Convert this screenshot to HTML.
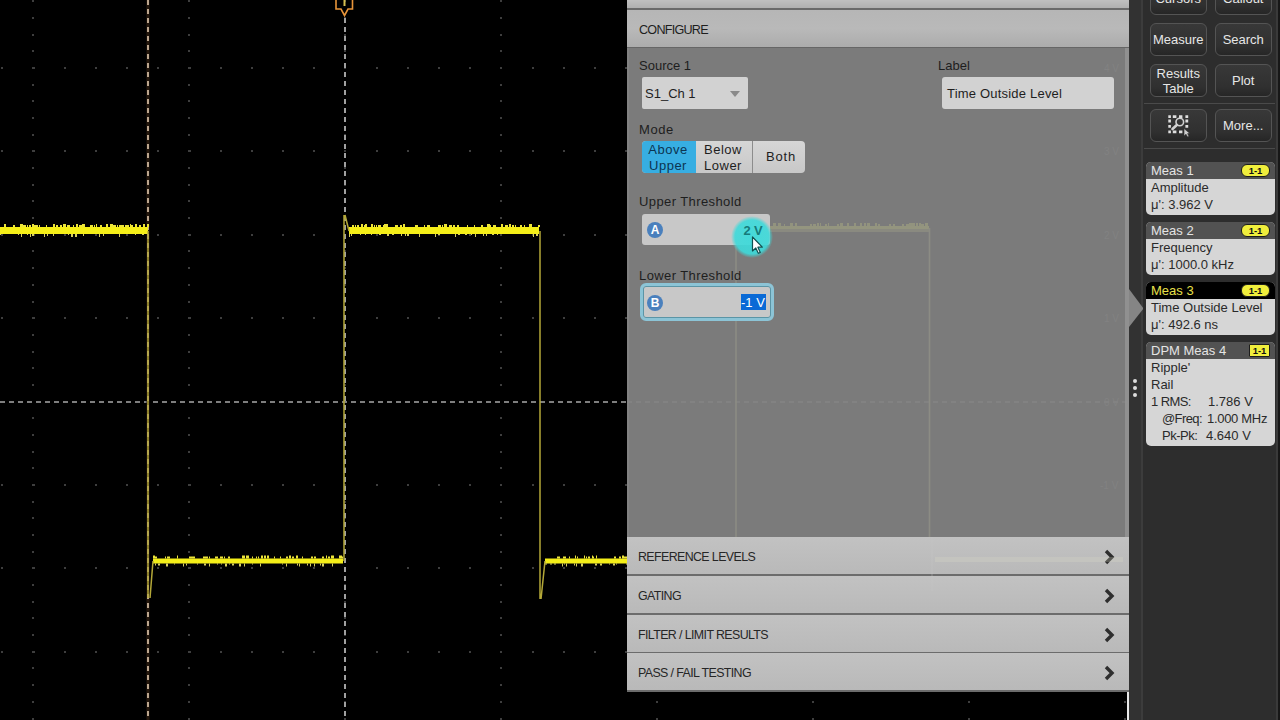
<!DOCTYPE html>
<html><head><meta charset="utf-8">
<style>
*{margin:0;padding:0;box-sizing:border-box}
html,body{width:1280px;height:720px;overflow:hidden;background:#000;font-family:"Liberation Sans",sans-serif}
.abs{position:absolute}
#scope{position:absolute;left:0;top:0;width:1280px;height:720px}
#panel{position:absolute;left:627px;top:0;width:502px;height:692px;background:#7b7b7b;overflow:hidden}
.t{position:absolute;white-space:nowrap;color:#1e1e1e;font-size:13px;line-height:1}
.sec{position:absolute;left:0;width:502px;height:39px;background:linear-gradient(#c2c2c2,#b9b9b9);border-bottom:2px solid #6c6c6c}
.sec .t{left:11px;top:14px;font-size:12.4px;letter-spacing:-0.6px;color:#262626}
.chev{position:absolute;left:474.5px;top:12px;width:14px;height:16px}
#side{position:absolute;left:1143px;top:0;width:137px;height:720px;background:#2d2d2d;border-left:1px solid #2d2d2d}
.btn{position:absolute;width:56.5px;height:33px;border:1.5px solid #545454;border-radius:6px;background:linear-gradient(#383838,#303030 70%,#262626);color:#e6e6e6;font-size:13px;text-align:center;line-height:15px}
.meas{position:absolute;left:2px;width:129px;border-radius:5px;overflow:hidden;background:#d6d6d6}
.mh{height:17px;background:#525252;color:#e4e4e4;font-size:13px;line-height:17px;padding-left:5px;position:relative}
.mb{color:#2a2a2a;font-size:13px;padding-left:5px;line-height:17px;white-space:nowrap}
.pill{position:absolute;right:5px;top:2px;width:29px;height:13px;border-radius:6px;background:#f0ee3c;border:1px solid #1c1c1c;color:#111;font-size:9.5px;font-weight:bold;line-height:11px;text-align:center}
</style></head><body>
<svg id="scope" width="1280" height="720" viewBox="0 0 1280 720">
<path d="M1 67h2v2h-2zM1 150h2v2h-2zM1 234h2v2h-2zM1 317h2v2h-2zM1 484h2v2h-2zM1 567h2v2h-2zM1 651h2v2h-2zM32 0h2v2h-2zM32 17h2v2h-2zM32 34h2v2h-2zM32 50h2v2h-2zM32 67h2v2h-2zM32 84h2v2h-2zM32 100h2v2h-2zM32 117h2v2h-2zM32 134h2v2h-2zM32 150h2v2h-2zM32 167h2v2h-2zM32 184h2v2h-2zM32 200h2v2h-2zM32 217h2v2h-2zM32 234h2v2h-2zM32 250h2v2h-2zM32 267h2v2h-2zM32 284h2v2h-2zM32 301h2v2h-2zM32 317h2v2h-2zM32 334h2v2h-2zM32 351h2v2h-2zM32 367h2v2h-2zM32 384h2v2h-2zM32 417h2v2h-2zM32 434h2v2h-2zM32 451h2v2h-2zM32 467h2v2h-2zM32 484h2v2h-2zM32 501h2v2h-2zM32 517h2v2h-2zM32 534h2v2h-2zM32 551h2v2h-2zM32 567h2v2h-2zM32 584h2v2h-2zM32 601h2v2h-2zM32 617h2v2h-2zM32 634h2v2h-2zM32 651h2v2h-2zM32 667h2v2h-2zM32 684h2v2h-2zM32 701h2v2h-2zM32 718h2v2h-2zM33 67h2v2h-2zM33 150h2v2h-2zM33 234h2v2h-2zM33 317h2v2h-2zM33 484h2v2h-2zM33 567h2v2h-2zM33 651h2v2h-2zM64 67h2v2h-2zM64 150h2v2h-2zM64 234h2v2h-2zM64 317h2v2h-2zM64 484h2v2h-2zM64 567h2v2h-2zM64 651h2v2h-2zM95 67h2v2h-2zM95 150h2v2h-2zM95 234h2v2h-2zM95 317h2v2h-2zM95 484h2v2h-2zM95 567h2v2h-2zM95 651h2v2h-2zM126 67h2v2h-2zM126 150h2v2h-2zM126 234h2v2h-2zM126 317h2v2h-2zM126 484h2v2h-2zM126 567h2v2h-2zM126 651h2v2h-2zM157 67h2v2h-2zM157 150h2v2h-2zM157 234h2v2h-2zM157 317h2v2h-2zM157 484h2v2h-2zM157 567h2v2h-2zM157 651h2v2h-2zM188 0h2v2h-2zM188 17h2v2h-2zM188 34h2v2h-2zM188 50h2v2h-2zM188 67h2v2h-2zM188 84h2v2h-2zM188 100h2v2h-2zM188 117h2v2h-2zM188 134h2v2h-2zM188 150h2v2h-2zM188 167h2v2h-2zM188 184h2v2h-2zM188 200h2v2h-2zM188 217h2v2h-2zM188 234h2v2h-2zM188 250h2v2h-2zM188 267h2v2h-2zM188 284h2v2h-2zM188 301h2v2h-2zM188 317h2v2h-2zM188 334h2v2h-2zM188 351h2v2h-2zM188 367h2v2h-2zM188 384h2v2h-2zM188 417h2v2h-2zM188 434h2v2h-2zM188 451h2v2h-2zM188 467h2v2h-2zM188 484h2v2h-2zM188 501h2v2h-2zM188 517h2v2h-2zM188 534h2v2h-2zM188 551h2v2h-2zM188 567h2v2h-2zM188 584h2v2h-2zM188 601h2v2h-2zM188 617h2v2h-2zM188 634h2v2h-2zM188 651h2v2h-2zM188 667h2v2h-2zM188 684h2v2h-2zM188 701h2v2h-2zM188 718h2v2h-2zM189 67h2v2h-2zM189 150h2v2h-2zM189 234h2v2h-2zM189 317h2v2h-2zM189 484h2v2h-2zM189 567h2v2h-2zM189 651h2v2h-2zM220 67h2v2h-2zM220 150h2v2h-2zM220 234h2v2h-2zM220 317h2v2h-2zM220 484h2v2h-2zM220 567h2v2h-2zM220 651h2v2h-2zM251 67h2v2h-2zM251 150h2v2h-2zM251 234h2v2h-2zM251 317h2v2h-2zM251 484h2v2h-2zM251 567h2v2h-2zM251 651h2v2h-2zM282 67h2v2h-2zM282 150h2v2h-2zM282 234h2v2h-2zM282 317h2v2h-2zM282 484h2v2h-2zM282 567h2v2h-2zM282 651h2v2h-2zM313 67h2v2h-2zM313 150h2v2h-2zM313 234h2v2h-2zM313 317h2v2h-2zM313 484h2v2h-2zM313 567h2v2h-2zM313 651h2v2h-2zM344 0h2v2h-2zM344 17h2v2h-2zM344 34h2v2h-2zM344 50h2v2h-2zM344 67h2v2h-2zM344 84h2v2h-2zM344 100h2v2h-2zM344 117h2v2h-2zM344 134h2v2h-2zM344 150h2v2h-2zM344 167h2v2h-2zM344 184h2v2h-2zM344 200h2v2h-2zM344 217h2v2h-2zM344 234h2v2h-2zM344 250h2v2h-2zM344 267h2v2h-2zM344 284h2v2h-2zM344 301h2v2h-2zM344 317h2v2h-2zM344 334h2v2h-2zM344 351h2v2h-2zM344 367h2v2h-2zM344 384h2v2h-2zM344 417h2v2h-2zM344 434h2v2h-2zM344 451h2v2h-2zM344 467h2v2h-2zM344 484h2v2h-2zM344 501h2v2h-2zM344 517h2v2h-2zM344 534h2v2h-2zM344 551h2v2h-2zM344 567h2v2h-2zM344 584h2v2h-2zM344 601h2v2h-2zM344 617h2v2h-2zM344 634h2v2h-2zM344 651h2v2h-2zM344 667h2v2h-2zM344 684h2v2h-2zM344 701h2v2h-2zM344 718h2v2h-2zM376 67h2v2h-2zM376 150h2v2h-2zM376 234h2v2h-2zM376 317h2v2h-2zM376 484h2v2h-2zM376 567h2v2h-2zM376 651h2v2h-2zM407 67h2v2h-2zM407 150h2v2h-2zM407 234h2v2h-2zM407 317h2v2h-2zM407 484h2v2h-2zM407 567h2v2h-2zM407 651h2v2h-2zM438 67h2v2h-2zM438 150h2v2h-2zM438 234h2v2h-2zM438 317h2v2h-2zM438 484h2v2h-2zM438 567h2v2h-2zM438 651h2v2h-2zM469 67h2v2h-2zM469 150h2v2h-2zM469 234h2v2h-2zM469 317h2v2h-2zM469 484h2v2h-2zM469 567h2v2h-2zM469 651h2v2h-2zM500 0h2v2h-2zM500 17h2v2h-2zM500 34h2v2h-2zM500 50h2v2h-2zM500 67h2v2h-2zM500 84h2v2h-2zM500 100h2v2h-2zM500 117h2v2h-2zM500 134h2v2h-2zM500 150h2v2h-2zM500 167h2v2h-2zM500 184h2v2h-2zM500 200h2v2h-2zM500 217h2v2h-2zM500 234h2v2h-2zM500 250h2v2h-2zM500 267h2v2h-2zM500 284h2v2h-2zM500 301h2v2h-2zM500 317h2v2h-2zM500 334h2v2h-2zM500 351h2v2h-2zM500 367h2v2h-2zM500 384h2v2h-2zM500 417h2v2h-2zM500 434h2v2h-2zM500 451h2v2h-2zM500 467h2v2h-2zM500 484h2v2h-2zM500 501h2v2h-2zM500 517h2v2h-2zM500 534h2v2h-2zM500 551h2v2h-2zM500 567h2v2h-2zM500 584h2v2h-2zM500 601h2v2h-2zM500 617h2v2h-2zM500 634h2v2h-2zM500 651h2v2h-2zM500 667h2v2h-2zM500 684h2v2h-2zM500 701h2v2h-2zM500 718h2v2h-2zM532 67h2v2h-2zM532 150h2v2h-2zM532 234h2v2h-2zM532 317h2v2h-2zM532 484h2v2h-2zM532 567h2v2h-2zM532 651h2v2h-2zM563 67h2v2h-2zM563 150h2v2h-2zM563 234h2v2h-2zM563 317h2v2h-2zM563 484h2v2h-2zM563 567h2v2h-2zM563 651h2v2h-2zM594 67h2v2h-2zM594 150h2v2h-2zM594 234h2v2h-2zM594 317h2v2h-2zM594 484h2v2h-2zM594 567h2v2h-2zM594 651h2v2h-2zM625 67h2v2h-2zM625 150h2v2h-2zM625 234h2v2h-2zM625 317h2v2h-2zM625 484h2v2h-2zM625 567h2v2h-2zM625 651h2v2h-2zM656 0h2v2h-2zM656 17h2v2h-2zM656 34h2v2h-2zM656 50h2v2h-2zM656 67h2v2h-2zM656 84h2v2h-2zM656 100h2v2h-2zM656 117h2v2h-2zM656 134h2v2h-2zM656 150h2v2h-2zM656 167h2v2h-2zM656 184h2v2h-2zM656 200h2v2h-2zM656 217h2v2h-2zM656 234h2v2h-2zM656 250h2v2h-2zM656 267h2v2h-2zM656 284h2v2h-2zM656 301h2v2h-2zM656 317h2v2h-2zM656 334h2v2h-2zM656 351h2v2h-2zM656 367h2v2h-2zM656 384h2v2h-2zM656 417h2v2h-2zM656 434h2v2h-2zM656 451h2v2h-2zM656 467h2v2h-2zM656 484h2v2h-2zM656 501h2v2h-2zM656 517h2v2h-2zM656 534h2v2h-2zM656 551h2v2h-2zM656 567h2v2h-2zM656 584h2v2h-2zM656 601h2v2h-2zM656 617h2v2h-2zM656 634h2v2h-2zM656 651h2v2h-2zM656 667h2v2h-2zM656 684h2v2h-2zM656 701h2v2h-2zM656 718h2v2h-2zM657 67h2v2h-2zM657 150h2v2h-2zM657 234h2v2h-2zM657 317h2v2h-2zM657 484h2v2h-2zM657 567h2v2h-2zM657 651h2v2h-2zM688 67h2v2h-2zM688 150h2v2h-2zM688 234h2v2h-2zM688 317h2v2h-2zM688 484h2v2h-2zM688 567h2v2h-2zM688 651h2v2h-2zM719 67h2v2h-2zM719 150h2v2h-2zM719 234h2v2h-2zM719 317h2v2h-2zM719 484h2v2h-2zM719 567h2v2h-2zM719 651h2v2h-2zM750 67h2v2h-2zM750 150h2v2h-2zM750 234h2v2h-2zM750 317h2v2h-2zM750 484h2v2h-2zM750 567h2v2h-2zM750 651h2v2h-2zM781 67h2v2h-2zM781 150h2v2h-2zM781 234h2v2h-2zM781 317h2v2h-2zM781 484h2v2h-2zM781 567h2v2h-2zM781 651h2v2h-2zM812 0h2v2h-2zM812 17h2v2h-2zM812 34h2v2h-2zM812 50h2v2h-2zM812 67h2v2h-2zM812 84h2v2h-2zM812 100h2v2h-2zM812 117h2v2h-2zM812 134h2v2h-2zM812 150h2v2h-2zM812 167h2v2h-2zM812 184h2v2h-2zM812 200h2v2h-2zM812 217h2v2h-2zM812 234h2v2h-2zM812 250h2v2h-2zM812 267h2v2h-2zM812 284h2v2h-2zM812 301h2v2h-2zM812 317h2v2h-2zM812 334h2v2h-2zM812 351h2v2h-2zM812 367h2v2h-2zM812 384h2v2h-2zM812 417h2v2h-2zM812 434h2v2h-2zM812 451h2v2h-2zM812 467h2v2h-2zM812 484h2v2h-2zM812 501h2v2h-2zM812 517h2v2h-2zM812 534h2v2h-2zM812 551h2v2h-2zM812 567h2v2h-2zM812 584h2v2h-2zM812 601h2v2h-2zM812 617h2v2h-2zM812 634h2v2h-2zM812 651h2v2h-2zM812 667h2v2h-2zM812 684h2v2h-2zM812 701h2v2h-2zM812 718h2v2h-2zM813 67h2v2h-2zM813 150h2v2h-2zM813 234h2v2h-2zM813 317h2v2h-2zM813 484h2v2h-2zM813 567h2v2h-2zM813 651h2v2h-2zM844 67h2v2h-2zM844 150h2v2h-2zM844 234h2v2h-2zM844 317h2v2h-2zM844 484h2v2h-2zM844 567h2v2h-2zM844 651h2v2h-2zM875 67h2v2h-2zM875 150h2v2h-2zM875 234h2v2h-2zM875 317h2v2h-2zM875 484h2v2h-2zM875 567h2v2h-2zM875 651h2v2h-2zM906 67h2v2h-2zM906 150h2v2h-2zM906 234h2v2h-2zM906 317h2v2h-2zM906 484h2v2h-2zM906 567h2v2h-2zM906 651h2v2h-2zM937 67h2v2h-2zM937 150h2v2h-2zM937 234h2v2h-2zM937 317h2v2h-2zM937 484h2v2h-2zM937 567h2v2h-2zM937 651h2v2h-2zM968 0h2v2h-2zM968 17h2v2h-2zM968 34h2v2h-2zM968 50h2v2h-2zM968 67h2v2h-2zM968 84h2v2h-2zM968 100h2v2h-2zM968 117h2v2h-2zM968 134h2v2h-2zM968 150h2v2h-2zM968 167h2v2h-2zM968 184h2v2h-2zM968 200h2v2h-2zM968 217h2v2h-2zM968 234h2v2h-2zM968 250h2v2h-2zM968 267h2v2h-2zM968 284h2v2h-2zM968 301h2v2h-2zM968 317h2v2h-2zM968 334h2v2h-2zM968 351h2v2h-2zM968 367h2v2h-2zM968 384h2v2h-2zM968 417h2v2h-2zM968 434h2v2h-2zM968 451h2v2h-2zM968 467h2v2h-2zM968 484h2v2h-2zM968 501h2v2h-2zM968 517h2v2h-2zM968 534h2v2h-2zM968 551h2v2h-2zM968 567h2v2h-2zM968 584h2v2h-2zM968 601h2v2h-2zM968 617h2v2h-2zM968 634h2v2h-2zM968 651h2v2h-2zM968 667h2v2h-2zM968 684h2v2h-2zM968 701h2v2h-2zM968 718h2v2h-2zM969 67h2v2h-2zM969 150h2v2h-2zM969 234h2v2h-2zM969 317h2v2h-2zM969 484h2v2h-2zM969 567h2v2h-2zM969 651h2v2h-2zM1000 67h2v2h-2zM1000 150h2v2h-2zM1000 234h2v2h-2zM1000 317h2v2h-2zM1000 484h2v2h-2zM1000 567h2v2h-2zM1000 651h2v2h-2zM1031 67h2v2h-2zM1031 150h2v2h-2zM1031 234h2v2h-2zM1031 317h2v2h-2zM1031 484h2v2h-2zM1031 567h2v2h-2zM1031 651h2v2h-2zM1062 67h2v2h-2zM1062 150h2v2h-2zM1062 234h2v2h-2zM1062 317h2v2h-2zM1062 484h2v2h-2zM1062 567h2v2h-2zM1062 651h2v2h-2zM1093 67h2v2h-2zM1093 150h2v2h-2zM1093 234h2v2h-2zM1093 317h2v2h-2zM1093 484h2v2h-2zM1093 567h2v2h-2zM1093 651h2v2h-2zM1124 0h2v2h-2zM1124 17h2v2h-2zM1124 34h2v2h-2zM1124 50h2v2h-2zM1124 67h2v2h-2zM1124 84h2v2h-2zM1124 100h2v2h-2zM1124 117h2v2h-2zM1124 134h2v2h-2zM1124 150h2v2h-2zM1124 167h2v2h-2zM1124 184h2v2h-2zM1124 200h2v2h-2zM1124 217h2v2h-2zM1124 234h2v2h-2zM1124 250h2v2h-2zM1124 267h2v2h-2zM1124 284h2v2h-2zM1124 301h2v2h-2zM1124 317h2v2h-2zM1124 334h2v2h-2zM1124 351h2v2h-2zM1124 367h2v2h-2zM1124 384h2v2h-2zM1124 417h2v2h-2zM1124 434h2v2h-2zM1124 451h2v2h-2zM1124 467h2v2h-2zM1124 484h2v2h-2zM1124 501h2v2h-2zM1124 517h2v2h-2zM1124 534h2v2h-2zM1124 551h2v2h-2zM1124 567h2v2h-2zM1124 584h2v2h-2zM1124 601h2v2h-2zM1124 617h2v2h-2zM1124 634h2v2h-2zM1124 651h2v2h-2zM1124 667h2v2h-2zM1124 684h2v2h-2zM1124 701h2v2h-2zM1124 718h2v2h-2zM1125 67h2v2h-2zM1125 150h2v2h-2zM1125 234h2v2h-2zM1125 317h2v2h-2zM1125 484h2v2h-2zM1125 567h2v2h-2zM1125 651h2v2h-2z" fill="#3e3e3e"/>
<path d="M0 402H627" stroke="#a8a8a8" stroke-width="1.5" stroke-dasharray="5 4"/>
<path d="M148 0V720" stroke="#24170c" stroke-width="3"/><path d="M148 0V720" stroke="#bca68e" stroke-width="2" stroke-dasharray="5 4"/>
<path d="M345 18V720" stroke="#a0a0a0" stroke-width="2" stroke-dasharray="5 4"/>
<rect x="0" y="227" width="148" height="7" fill="#f4ee18"/><path d="M4 227h2v-3h-2zM13 227h2v-2h-2zM20 227h3v-3h-3zM23 227h3v-2h-3zM27 227h1v-2h-1zM29 227h2v-2h-2zM32 227h2v-3h-2zM34 227h2v-2h-2zM36 227h2v-2h-2zM39 227h1v-2h-1zM46 227h1v-2h-1zM53 227h2v-3h-2zM56 227h2v-2h-2zM60 227h1v-2h-1zM61 227h1v-2h-1zM63 227h3v-3h-3zM67 227h1v-2h-1zM68 227h2v-2h-2zM73 227h1v-2h-1zM76 227h2v-3h-2zM79 227h2v-2h-2zM81 227h1v-2h-1zM82 227h3v-3h-3zM90 227h3v-2h-3zM94 227h1v-2h-1zM96 227h1v-3h-1zM100 227h2v-2h-2zM106 227h2v-3h-2zM110 227h2v-3h-2zM112 227h1v-3h-1zM113 227h2v-2h-2zM115 227h1v-2h-1zM117 227h1v-2h-1zM119 227h3v-2h-3zM122 227h2v-2h-2zM125 227h3v-2h-3zM128 227h1v-2h-1zM130 227h1v-3h-1zM131 227h2v-2h-2zM135 227h2v-3h-2zM139 227h2v-2h-2zM143 227h2v-3h-2zM147 227h2v-3h-2z" fill="#ece43a"/><path d="M0 234h1v1h-1zM18 234h1v1h-1zM21 234h1v3h-1zM27 234h1v1h-1zM30 234h1v3h-1zM32 234h2v2h-2zM44 234h1v3h-1zM47 234h1v2h-1zM53 234h1v2h-1zM68 234h1v1h-1zM71 234h2v3h-2zM75 234h2v3h-2zM83 234h1v2h-1zM99 234h1v3h-1zM103 234h1v2h-1zM119 234h1v3h-1zM135 234h1v1h-1zM142 234h2v1h-2z" fill="#d8d060"/>
<rect x="153" y="558.5" width="190" height="5.0" fill="#f4ee18"/><path d="M153 558.5h2v-3h-2zM155 558.5h2v-2h-2zM165 558.5h1v-2h-1zM167 558.5h3v-2h-3zM177 558.5h1v-3h-1zM189 558.5h3v-2h-3zM192 558.5h3v-2h-3zM203 558.5h2v-2h-2zM205 558.5h3v-2h-3zM209 558.5h1v-2h-1zM215 558.5h3v-2h-3zM220 558.5h3v-2h-3zM224 558.5h1v-2h-1zM228 558.5h2v-2h-2zM242 558.5h3v-3h-3zM246 558.5h3v-3h-3zM252 558.5h1v-2h-1zM256 558.5h1v-2h-1zM258 558.5h1v-2h-1zM261 558.5h2v-3h-2zM264 558.5h1v-3h-1zM265 558.5h1v-3h-1zM267 558.5h2v-3h-2zM274 558.5h1v-2h-1zM280 558.5h1v-2h-1zM286 558.5h2v-2h-2zM289 558.5h2v-3h-2zM292 558.5h2v-2h-2zM296 558.5h2v-3h-2zM302 558.5h1v-2h-1zM311 558.5h2v-2h-2zM314 558.5h2v-2h-2zM322 558.5h2v-2h-2zM326 558.5h1v-3h-1zM328 558.5h2v-2h-2zM331 558.5h3v-3h-3zM339 558.5h3v-3h-3zM342 558.5h1v-2h-1z" fill="#ece43a"/><path d="M155 563.5h1v2h-1zM158 563.5h2v2h-2zM166 563.5h2v3h-2zM174 563.5h1v1h-1zM183 563.5h1v3h-1zM186 563.5h1v2h-1zM197 563.5h1v1h-1zM204 563.5h2v2h-2zM209 563.5h1v3h-1zM217 563.5h1v1h-1zM221 563.5h1v1h-1zM225 563.5h2v3h-2zM229 563.5h1v1h-1zM232 563.5h2v2h-2zM239 563.5h2v3h-2zM244 563.5h1v3h-1zM252 563.5h1v1h-1zM260 563.5h1v3h-1zM282 563.5h1v1h-1zM286 563.5h1v3h-1zM297 563.5h1v2h-1zM299 563.5h1v3h-1zM307 563.5h1v2h-1zM310 563.5h1v3h-1zM314 563.5h1v3h-1zM320 563.5h1v2h-1zM322 563.5h2v3h-2zM332 563.5h1v3h-1z" fill="#d8d060"/>
<rect x="349" y="227" width="190" height="7" fill="#f4ee18"/><path d="M352 227h2v-2h-2zM355 227h1v-2h-1zM357 227h2v-2h-2zM361 227h2v-3h-2zM364 227h1v-2h-1zM365 227h2v-3h-2zM371 227h2v-3h-2zM374 227h1v-2h-1zM376 227h1v-2h-1zM378 227h3v-2h-3zM383 227h1v-2h-1zM384 227h2v-3h-2zM386 227h2v-3h-2zM395 227h3v-2h-3zM400 227h2v-2h-2zM403 227h2v-3h-2zM415 227h3v-2h-3zM424 227h1v-2h-1zM427 227h3v-2h-3zM438 227h3v-2h-3zM442 227h1v-2h-1zM444 227h3v-3h-3zM449 227h3v-2h-3zM453 227h2v-2h-2zM457 227h2v-2h-2zM467 227h1v-2h-1zM474 227h1v-2h-1zM481 227h2v-2h-2zM487 227h3v-3h-3zM490 227h1v-2h-1zM493 227h1v-2h-1zM494 227h2v-2h-2zM501 227h2v-3h-2zM505 227h3v-2h-3zM509 227h2v-3h-2zM512 227h2v-2h-2zM515 227h1v-2h-1zM520 227h2v-2h-2zM524 227h1v-2h-1zM529 227h3v-3h-3zM538 227h2v-2h-2z" fill="#ece43a"/><path d="M349 234h1v3h-1zM351 234h1v2h-1zM360 234h1v1h-1zM365 234h1v1h-1zM371 234h1v1h-1zM379 234h2v1h-2zM387 234h2v2h-2zM392 234h2v1h-2zM401 234h1v2h-1zM405 234h1v2h-1zM407 234h2v2h-2zM419 234h1v3h-1zM435 234h1v3h-1zM438 234h2v1h-2zM455 234h1v3h-1zM458 234h2v1h-2zM465 234h2v1h-2zM471 234h1v1h-1zM475 234h1v3h-1zM483 234h1v2h-1zM486 234h1v2h-1zM492 234h2v1h-2zM497 234h1v1h-1zM533 234h1v3h-1zM536 234h2v2h-2z" fill="#d8d060"/>
<rect x="545" y="558.5" width="82" height="5.0" fill="#f4ee18"/><path d="M557 558.5h3v-2h-3zM563 558.5h3v-2h-3zM569 558.5h1v-2h-1zM575 558.5h1v-3h-1zM577 558.5h1v-2h-1zM584 558.5h1v-3h-1zM586 558.5h1v-2h-1zM588 558.5h2v-2h-2zM592 558.5h1v-3h-1zM593 558.5h1v-2h-1zM596 558.5h1v-3h-1zM614 558.5h2v-2h-2zM619 558.5h2v-2h-2zM622 558.5h2v-3h-2zM624 558.5h3v-2h-3z" fill="#ece43a"/><path d="M545 563.5h2v1h-2zM550 563.5h2v1h-2zM554 563.5h2v1h-2zM562 563.5h1v3h-1zM564 563.5h1v1h-1zM566 563.5h1v3h-1zM574 563.5h1v2h-1zM576 563.5h1v3h-1zM581 563.5h2v3h-2zM595 563.5h2v2h-2zM600 563.5h2v2h-2zM609 563.5h1v1h-1zM613 563.5h2v2h-2zM616 563.5h1v1h-1zM626 563.5h1v1h-1z" fill="#d8d060"/>
<path d="M148 231V598M150 598L153 561" stroke="#b4a838" stroke-width="1.5" fill="none"/>
<path d="M344 561V215M345 215L349 231" stroke="#b4a838" stroke-width="1.5" fill="none"/>
<path d="M540 231V599M541 599L545 561" stroke="#b4a838" stroke-width="1.5" fill="none"/>
<path d="M336 0V9H341L344.5 15.5L348 9H352.5V0" fill="none" stroke="#e8953a" stroke-width="1.6"/>
<path d="M344.5 0V6" stroke="#d8c050" stroke-width="2"/>
<rect x="1127" y="691" width="2" height="29" fill="#e8e8e8"/>
</svg>

<div id="panel">
  <svg class="abs" style="left:0;top:0" width="501" height="691" viewBox="627 0 501 691">
    <path d="M627 402H1128" stroke="#858585" stroke-width="1.5" stroke-dasharray="5 4"/>
    <rect x="741" y="226" width="188" height="3" fill="#94957f"/><rect x="741" y="229" width="188" height="3" fill="#8a8a80"/><path d="M741 226h2v-2h-2zM749 226h2v-2h-2zM753 226h3v-3h-3zM769 226h1v-3h-1zM773 226h3v-3h-3zM778 226h3v-3h-3zM784 226h1v-2h-1zM790 226h3v-3h-3zM795 226h2v-3h-2zM810 226h2v-2h-2zM813 226h3v-2h-3zM817 226h2v-3h-2zM820 226h1v-3h-1zM825 226h2v-2h-2zM828 226h1v-3h-1zM837 226h2v-2h-2zM840 226h3v-3h-3zM847 226h2v-3h-2zM854 226h2v-3h-2zM860 226h2v-3h-2zM864 226h2v-3h-2zM867 226h3v-3h-3zM875 226h2v-3h-2zM878 226h2v-2h-2zM889 226h2v-2h-2zM893 226h2v-2h-2zM902 226h2v-2h-2zM906 226h3v-2h-3zM909 226h2v-3h-2zM911 226h2v-3h-2zM913 226h2v-3h-2zM916 226h2v-3h-2zM919 226h2v-3h-2zM921 226h3v-2h-3zM925 226h3v-3h-3z" fill="#92937e"/>
    <path d="M736 561V224M929.5 228V691" stroke="#8c8c84" stroke-width="1.6"/>
    <rect x="935" y="557" width="190" height="5" fill="#c4c4bc" opacity="0.7"/>
    <g font-family="Liberation Sans" font-size="10" fill="#828282">
      <text x="1104" y="72">4 V</text><text x="1104" y="155">3 V</text><text x="1104" y="239">2 V</text>
      <text x="1104" y="322">1 V</text><text x="1104" y="406">0 V</text><text x="1100" y="489">-1 V</text>
    </g>
  </svg>
  <div class="abs" style="left:0;top:0;width:502px;height:8px;background:linear-gradient(#c0c0c0,#b0b0b0)"></div>
  <div class="abs" style="left:0;top:8px;width:502px;height:1.5px;background:#6a6a6a"></div>
  <div class="abs" style="left:0;top:10px;width:502px;height:37px;background:linear-gradient(#b6b6b6,#b9b9b9 50%,#acacac)"></div>
  <div class="abs" style="left:0;top:46.5px;width:502px;height:1.5px;background:#666"></div>
  <div class="t" style="left:12px;top:24px;font-size:12.6px;letter-spacing:-0.75px">CONFIGURE</div>

  <div class="t" style="left:12px;top:59px">Source 1</div>
  <div class="abs" style="left:15px;top:77px;width:106px;height:32px;background:#d2d2d2;border-radius:2px"></div>
  <div class="t" style="left:18px;top:87px">S1_Ch 1</div>
  <div class="abs" style="left:103px;top:91px;width:0;height:0;border-left:5px solid transparent;border-right:5px solid transparent;border-top:6px solid #8a8a8a"></div>

  <div class="t" style="left:311px;top:59px">Label</div>
  <div class="abs" style="left:315px;top:77px;width:172px;height:32px;background:#d2d2d2;border-radius:3px"></div>
  <div class="t" style="left:320px;top:87px;letter-spacing:0.2px">Time Outside Level</div>

  <div class="t" style="left:12px;top:123px;letter-spacing:0.6px">Mode</div>
  <div class="abs" style="left:15px;top:141px;width:163px;height:32px;border-radius:4px;background:linear-gradient(#d6d6d6,#c8c8c8);overflow:hidden">
    <div class="abs" style="left:0;top:0;width:54px;height:32px;background:#37aee2"></div>
    <div class="abs" style="left:110px;top:0;width:1px;height:32px;background:#8c8c8c"></div>
  </div>
  <div class="t" style="left:18px;top:142px;color:#0c3552;line-height:16px;text-align:center;width:46px;letter-spacing:0.5px">Above<br>Upper</div>
  <div class="t" style="left:72px;top:142px;line-height:16px;text-align:center;width:48px;letter-spacing:0.5px">Below<br>Lower</div>
  <div class="t" style="left:139px;top:150px;letter-spacing:0.8px">Both</div>

  <div class="t" style="left:12px;top:195px;letter-spacing:0.4px">Upper Threshold</div>
  <div class="abs" style="left:15px;top:214px;width:128px;height:31px;background:#c8c8c8;border-radius:3px"></div>
  <div class="abs" style="left:20px;top:222px;width:16px;height:16px;border-radius:50%;background:#4a80bd;color:#fff;font-size:12px;font-weight:bold;text-align:center;line-height:16px">A</div>

  <div class="t" style="left:12px;top:269px;letter-spacing:0.4px">Lower Threshold</div>
  <div class="abs" style="left:12.5px;top:283px;width:134px;height:38px;border:3px solid #8cc4d6;border-radius:6px;background:#c8c8c8;box-shadow:inset 0 0 0 1px #5b95a6"></div>
  <div class="abs" style="left:20px;top:295px;width:16px;height:16px;border-radius:50%;background:#4a80bd;color:#fff;font-size:12px;font-weight:bold;text-align:center;line-height:16px">B</div>
  <div class="abs" style="left:114px;top:294px;width:25px;height:16px;background:#0a6ad6"></div>
  <div class="t" style="left:114px;top:296px;color:#fff">-1 V</div>

  <div class="sec" style="top:537px"><div class="t">REFERENCE LEVELS</div><svg class="chev" viewBox="0 0 14 16"><path d="M4 2L10 8L4 14" fill="none" stroke="#2e2e2e" stroke-width="3.4"/></svg></div>
  <div class="sec" style="top:576px"><div class="t">GATING</div><svg class="chev" viewBox="0 0 14 16"><path d="M4 2L10 8L4 14" fill="none" stroke="#2e2e2e" stroke-width="3.4"/></svg></div>
  <div class="sec" style="top:615px"><div class="t">FILTER / LIMIT RESULTS</div><svg class="chev" viewBox="0 0 14 16"><path d="M4 2L10 8L4 14" fill="none" stroke="#2e2e2e" stroke-width="3.4"/></svg></div>
  <div class="sec" style="top:653px"><div class="t">PASS / FAIL TESTING</div><svg class="chev" viewBox="0 0 14 16"><path d="M4 2L10 8L4 14" fill="none" stroke="#2e2e2e" stroke-width="3.4"/></svg></div>
  <div class="abs" style="left:0;top:48px;width:2px;height:489px;background:#858585;opacity:0.8"></div>
  <div class="abs" style="left:498px;top:48px;width:4px;height:489px;background:#929292;opacity:0.9"></div>
</div>

<!-- touch circle + cursor -->
<div class="abs" style="left:731px;top:216px;width:42px;height:42px;border-radius:50%;background:radial-gradient(circle,rgba(62,218,218,0.95) 0,rgba(62,218,218,0.9) 17px,rgba(62,218,218,0) 21px)"></div>
<div class="t" style="left:743.5px;top:223.5px;color:#167a7a;font-weight:bold;letter-spacing:-0.2px">2 V</div>
<svg class="abs" style="left:751px;top:236px" width="16" height="20" viewBox="0 0 16 20"><path d="M1.5 1V15L4.8 12L7.3 17.3L9.3 16.4L6.9 11.2H11.3Z" fill="#fff" stroke="#12504f" stroke-width="1.2" stroke-linejoin="round"/></svg>

<div class="abs" style="left:1129px;top:0;width:12px;height:720px;background:#323232"></div><div class="abs" style="left:1141px;top:0;width:2px;height:720px;background:#3c3c3c"></div>
<svg class="abs" style="left:1129px;top:289px" width="16" height="38" viewBox="0 0 16 38"><path d="M0 0L14.5 19.5L0 38Z" fill="#858585"/></svg>
<div class="abs" style="left:1133px;top:379px;width:4px;height:4px;border-radius:50%;background:#ddd"></div>
<div class="abs" style="left:1133px;top:386px;width:4px;height:4px;border-radius:50%;background:#ddd"></div>
<div class="abs" style="left:1133px;top:393px;width:4px;height:4px;border-radius:50%;background:#ddd"></div>

<svg class="abs" style="left:1160px;top:108px;z-index:5" width="40" height="32" viewBox="1160 108 40 32">
  <path d="M1168.3 115.3h2.6v2.6h-2.6zM1172.8 115.3h3.6v2.6h-3.6zM1179 115.3h3.4v2.6h-3.4zM1185.4 115.3h2.8v2.6h-2.8zM1168.3 119.6h2.6v2.8h-2.6zM1168.3 124.9h2.6v2.8h-2.6zM1168.3 130.6h2.6v2.6h-2.6zM1172.8 130.6h3.6v2.6h-3.6zM1179 130.6h3.4v2.6h-3.4zM1185.4 119.6h2.8v2.8h-2.8zM1185.4 124.9h2.8v2.8h-2.8z" fill="#dedede"/>
  <circle cx="1179.8" cy="122" r="3.8" fill="none" stroke="#d0d0d0" stroke-width="1.6"/>
  <path d="M1176.8 125L1172.5 129" stroke="#d0d0d0" stroke-width="2.6" stroke-linecap="round"/>
  <path d="M1184 128.5V136L1186 134.2L1187.6 137L1189 136.3L1187.6 133.6H1190Z" fill="#cfcfcf" stroke="#2c2c2c" stroke-width="0.6"/>
</svg>
<div class="abs" style="left:935px;top:557px;width:188px;height:5px;background:rgba(220,220,200,0.25)"></div>
<div class="abs" style="left:931px;top:537px;width:2px;height:54px;background:rgba(200,200,200,0.2)"></div>
<div id="side">
  <div class="btn" style="left:6px;top:-18px;line-height:31px">Cursors</div>
  <div class="btn" style="left:71px;top:-18px;line-height:31px">Callout</div>
  <div class="btn" style="left:6px;top:23px;line-height:31px">Measure</div>
  <div class="btn" style="left:71px;top:23px;line-height:31px">Search</div>
  <div class="btn" style="left:6px;top:64px;padding-top:1px">Results<br>Table</div>
  <div class="btn" style="left:71px;top:64px;line-height:31px">Plot</div>
  <div class="abs" style="left:0;top:103px;width:131px;height:1px;background:#4a4a4a"></div>
  <div class="btn" style="left:6px;top:109px"></div>
  <div class="btn" style="left:71px;top:109px;line-height:31px">More...</div>
  <div class="abs" style="left:0;top:148px;width:131px;height:1px;background:#4a4a4a"></div>
  <div class="abs" style="left:132px;top:0;width:2px;height:720px;background:#3a3a3a"></div><div class="abs" style="left:134px;top:0;width:3px;height:720px;background:#171717"></div>

  <div class="meas" style="top:162px;height:53px"><div class="mh">Meas 1<span class="pill">1-1</span></div><div class="mb">Amplitude<br>μ': 3.962 V</div></div>
  <div class="meas" style="top:222px;height:53px"><div class="mh">Meas 2<span class="pill">1-1</span></div><div class="mb">Frequency<br>μ': 1000.0 kHz</div></div>
  <div class="meas" style="top:282px;height:53px"><div class="mh" style="background:#000;color:#e8e04a">Meas 3<span class="pill">1-1</span></div><div class="mb">Time Outside Level<br>μ': 492.6 ns</div></div>
  <div class="meas" style="top:342px;height:104px"><div class="mh">DPM Meas 4<span class="pill" style="border-radius:1px;width:21px;right:5px">1-1</span></div><div class="mb" style="position:relative;height:87px">Ripple'<br>Rail<br><span style="letter-spacing:-0.6px">1 RMS:</span><br><span style="position:absolute;left:62px;top:34px">1.786 V</span><span style="position:absolute;left:16px;top:51px;letter-spacing:-0.6px">@Freq:</span><span style="position:absolute;left:61px;top:51px;letter-spacing:-0.3px">1.000 MHz</span><span style="position:absolute;left:16px;top:68px;letter-spacing:-0.5px">Pk-Pk:</span><span style="position:absolute;left:60px;top:68px">4.640 V</span></div></div>
</div>
</body></html>
